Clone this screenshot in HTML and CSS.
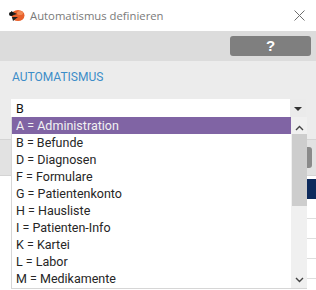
FILE: index.html
```html
<!DOCTYPE html>
<html lang="de">
    <head>
        <meta charset="UTF-8">
        <title>Automatismus definieren</title>
        <link rel="stylesheet" href="styles.css">
    </head>
<body>
    <div class="window">
        <div class="titlebar">
            <svg class="app-icon" width="17" height="15" viewBox="0 0 17 15">
                <ellipse cx="10" cy="7.5" rx="6.5" ry="5.5" fill="#e8612c"/>
                <path d="M3 3 L9 6 L3 8 Z" fill="#222"/>
                <path d="M4 9 L10 9 L5 13 Z" fill="#222"/>
                <ellipse cx="12" cy="5" rx="3" ry="2" fill="#f28a55"/>
                <circle cx="3" cy="6" r="2" fill="#111"/>
            </svg>
            <span class="title">Automatismus definieren</span>
            <svg class="close" width="11" height="11" viewBox="0 0 11 11">
                <path d="M0.5 0.5 L10.5 10.5 M10.5 0.5 L0.5 10.5" stroke="#6e6e6e" stroke-width="1"/>
            </svg>
        </div>
        <div class="toolbar">
            <button class="help-btn">?</button>
        </div>
        <div class="content">
            <div class="section-label">AUTOMATISMUS</div>
            <div class="combo">
                <div class="combo-input">B</div>
                <div class="combo-arrow"><span class="tri"></span></div>
            </div>
            <div class="strip">
                <div class="strip-btn"></div>
            </div>
            <div class="grid">
                <div class="grid-head"></div>
                <div class="grid-row"></div>
                <div class="grid-row"></div>
                <div class="grid-row"></div>
                <div class="grid-row"></div>
                <div class="grid-row"></div>
            </div>

            <!-- open dropdown of the combo -->
            <div class="dropdown">
                <ul class="options">
                    <li class="selected">A = Administration</li>
                    <li>B = Befunde</li>
                    <li>D = Diagnosen</li>
                    <li>F = Formulare</li>
                    <li>G = Patientenkonto</li>
                    <li>H = Hausliste</li>
                    <li>I = Patienten-Info</li>
                    <li>K = Kartei</li>
                    <li>L = Labor</li>
                    <li>M = Medikamente</li>
                </ul>
                <div class="scrollbar">
                    <svg class="chev" width="9" height="6" viewBox="0 0 9 6">
                        <path d="M1 5 L4.5 1.5 L8 5" fill="none" stroke="#444" stroke-width="1.4"/>
                    </svg>
                    <div class="thumb"></div>
                    <svg class="chev chev-down" width="9" height="6" viewBox="0 0 9 6">
                        <path d="M1 1 L4.5 4.5 L8 1" fill="none" stroke="#444" stroke-width="1.4"/>
                    </svg>
                </div>
            </div>
        </div>
    </div>
</body>
</html>
```

FILE: styles.css
```css
    body {
        margin: 0;
        padding: 0;
        font-family: Roboto, "Liberation Sans", sans-serif;
        background-color: #ececec;
    }
    .window {
        width: 316px;
        height: 290px;
        overflow: hidden;
        display: flex;
        flex-direction: column;
    }
    .titlebar {
        flex-shrink: 0;
        height: 31px;
        background: white;
        display: flex;
        align-items: center;
        padding-left: 8px;
        padding-right: 11px;
    }
    .app-icon {
        margin-right: 5px;
    }
    .title {
        font-family: "Open Sans", "Noto Sans", sans-serif;
        font-size: 11.3px;
        color: #7a7a7a;
    }
    .close {
        margin-left: auto;
    }
    .toolbar {
        flex-shrink: 0;
        height: 30px;
        background-color: #dcdcdc;
        display: flex;
        justify-content: flex-end;
        align-items: center;
        padding-right: 5px;
    }
    .help-btn {
        width: 81px;
        height: 20px;
        border: none;
        border-radius: 3px;
        background-color: #7f7f7f;
        color: white;
        font-family: "Liberation Sans", Arial, sans-serif;
        font-weight: bold;
        font-size: 15px;
        line-height: 20px;
        padding: 0;
    }
    .content {
        position: relative;
        flex: 1;
        background-color: #ececec;
        padding-top: 9px;
    }
    .section-label {
        margin-left: 12px;
        font-size: 12px;
        line-height: 14px;
        color: #3c8dc8;
    }
    .combo {
        display: flex;
        margin: 15px 10px 0 11px;
        height: 19px;
    }
    .combo-input {
        flex: 1;
        background: white;
        font-size: 12.5px;
        line-height: 20px;
        padding-left: 5px;
        color: #111;
    }
    .combo-arrow {
        width: 16px;
        display: flex;
        justify-content: center;
        align-items: center;
        background-color: #ebebeb;
    }
    .tri {
        width: 0;
        height: 0;
        border-left: 4px solid transparent;
        border-right: 4px solid transparent;
        border-top: 4px solid #333;
    }
    .strip {
        margin-top: 21px;
        height: 35px;
        background-color: #e2e2e2;
        border-top: 1px solid #d4d4d4;
        border-bottom: 1px solid #d4d4d4;
        display: flex;
        justify-content: flex-end;
        align-items: center;
    }
    .strip-btn {
        width: 40px;
        height: 21px;
        margin-right: 4px;
        background-color: #8a8a8a;
        border-radius: 3px;
    }
    .grid {
        background: white;
        padding-top: 3px;
        height: 120px;
    }
    .grid-head {
        margin-left: 20px;
        height: 20px;
        background-color: #0d2a5c;
    }
    .grid-row {
        margin-left: 20px;
        height: 19px;
        border-bottom: 1px solid #dedede;
    }
    .dropdown {
        position: absolute;
        top: 56px;
        left: 11px;
        width: 295px;
        height: 171px;
        display: flex;
        background: white;
        border-left: 1px solid #d6d6d6;
        border-bottom: 1px solid #d6d6d6;
    }
    .options {
        flex: 1;
        list-style: none;
        margin: 0;
        padding: 0;
    }
    .options li {
        height: 17px;
        line-height: 18px;
        padding-left: 4px;
        font-size: 12.5px;
        color: #262626;
        white-space: nowrap;
    }
    .options li.selected {
        background-color: #8064a4;
        color: #f2f2f2;
    }
    .scrollbar {
        width: 16px;
        background-color: #f0f0f0;
        display: flex;
        flex-direction: column;
        align-items: center;
    }
    .chev {
        margin-top: 8px;
        margin-bottom: 3px;
    }
    .thumb {
        width: 15px;
        height: 72px;
        background-color: #cdcdcd;
    }
    .chev-down {
        margin-top: auto;
        margin-bottom: 5px;
    }
```
